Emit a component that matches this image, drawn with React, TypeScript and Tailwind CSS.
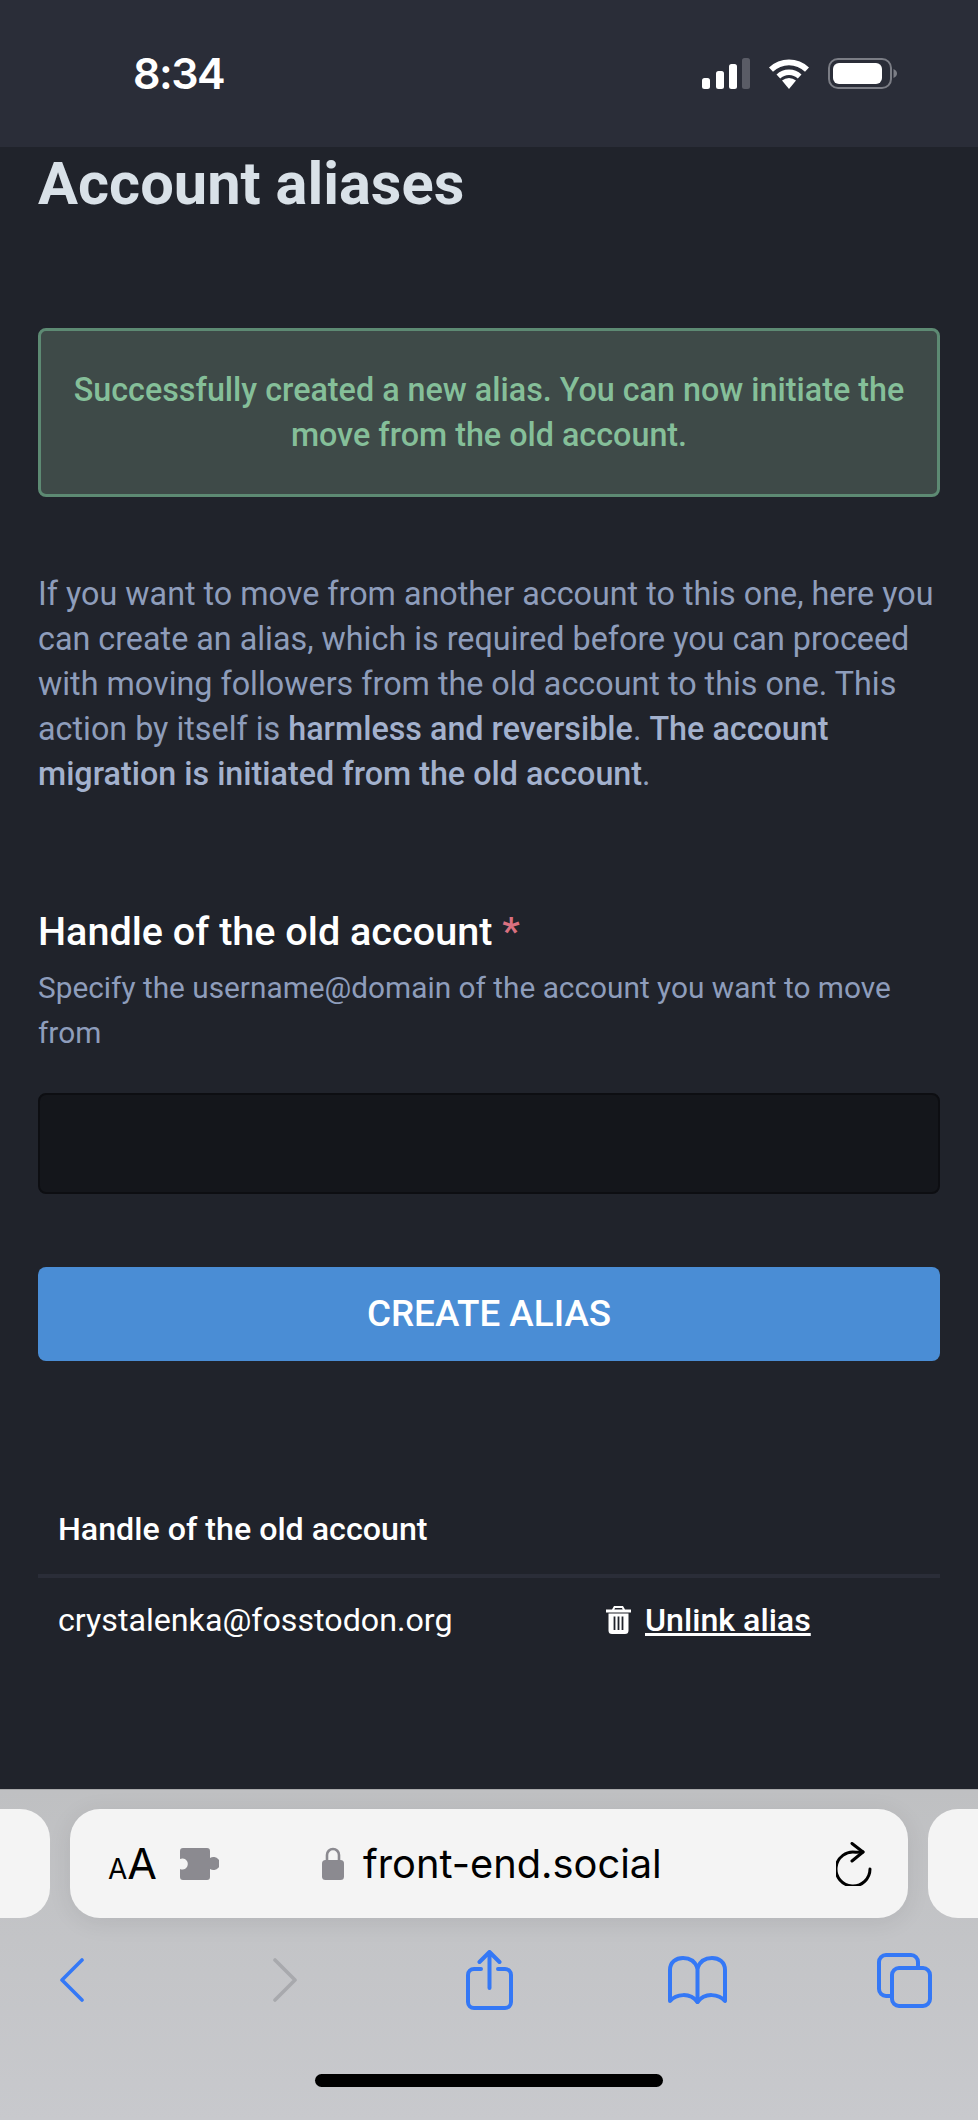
function StatusIcons() {
  return (
    <div className="flex items-center">
      {/* signal */}
      <svg width="48" height="31" viewBox="0 0 48 31">
        <rect x="0" y="20" width="8" height="11" rx="2.5" fill="#fff" />
        <rect x="14" y="13" width="8" height="18" rx="2.5" fill="#fff" />
        <rect x="27" y="6" width="8" height="25" rx="2.5" fill="#fff" />
        <rect x="40" y="0" width="8" height="31" rx="2.5" fill="#5a5c66" />
      </svg>
      {/* wifi */}
      <svg className="ml-[18px]" width="42" height="31" viewBox="0 0 42 31">
        <path d="M21 31 L14 22.5 A11 11 0 0 1 28 22.5 Z" fill="#fff" />
        <path d="M8.5 16.5 A18 18 0 0 1 33.5 16.5 L29.8 20.6 A12.5 12.5 0 0 0 12.2 20.6 Z" fill="#fff" />
        <path d="M1 9.5 A29 29 0 0 1 41 9.5 L37 13.8 A23 23 0 0 0 5 13.8 Z" fill="#fff" />
      </svg>
      {/* battery */}
      <svg className="ml-[18px]" width="69" height="31" viewBox="0 0 69 31">
        <rect x="1" y="1" width="62" height="29" rx="9" fill="none" stroke="#7b7d85" strokeWidth="2" />
        <rect x="5" y="5" width="49" height="21" rx="6" fill="#fff" />
        <path d="M65.5 11 C68 12 69 14 69 15.5 C69 17 68 19 65.5 20 Z" fill="#7b7d85" />
      </svg>
    </div>
  );
}

function TrashIcon() {
  return (
    <svg width="25" height="28" viewBox="0 0 25 28" fill="#fff">
      <path d="M8 0 H17 L19 3.5 H25 V6.5 H0 V3.5 H6 Z M9 2 L8.4 3.5 H16.6 L16 2 Z" fillRule="evenodd" />
      <path
        d="M2.5 7.5 H22.5 V24.5 A3.5 3.5 0 0 1 19 28 H6 A3.5 3.5 0 0 1 2.5 24.5 Z M7.6 10.5 V24 H9.4 V10.5 Z M11.6 10.5 V24 H13.4 V10.5 Z M15.6 10.5 V24 H17.4 V10.5 Z"
        fillRule="evenodd"
      />
    </svg>
  );
}

function PuzzleIcon() {
  return (
    <svg width="39" height="32" viewBox="0 0 39 32" fill="#8b8a90">
      <path d="M3 0 H27 A3 3 0 0 1 30 3 V10 A6.5 6.5 0 1 1 30 21 V29 A3 3 0 0 1 27 32 H3 A3 3 0 0 1 0 29 V21 A5.5 5.5 0 1 0 0 11 V3 A3 3 0 0 1 3 0 Z" />
    </svg>
  );
}

function LockIcon() {
  return (
    <svg width="22" height="33" viewBox="0 0 22 33" fill="none">
      <path d="M5 15 V8 A6 6 0 0 1 17 8 V15" stroke="#8b8a90" strokeWidth="2.6" />
      <rect x="0" y="13" width="22" height="20" rx="3.5" fill="#8b8a90" />
    </svg>
  );
}

function ReloadIcon() {
  return (
    <svg width="38" height="44" viewBox="0 0 38 44" fill="none" stroke="#000" strokeWidth="3" strokeLinecap="round" strokeLinejoin="round">
      <path d="M34 27 A17 17 0 1 1 20 10.3 L27 10" />
      <path d="M16 1.5 L27 10 L16 19" />
    </svg>
  );
}

function Toolbar() {
  const blue = "#3478f6";
  return (
    <div className="flex flex-col h-[331px] overflow-hidden bg-gradient-to-b from-[#bfc0c2] to-[#c8c9cd] border-t border-[#a8a9ab]">
      <div className="flex items-stretch gap-[20px] h-[109px] mt-[19px] font-['Inter',sans-serif]">
        <div className="w-[50px] shrink-0 bg-[#f4f4f4] rounded-r-[30px]" />
        <div className="w-[838px] shrink-0 flex items-center bg-[#f4f4f4] rounded-[30px] shadow-[0_4px_24px_rgba(0,0,0,0.08)]">
          <span className="ml-[38px] flex items-baseline font-['Inter',sans-serif] text-black leading-none">
            <span className="text-[28px]">A</span>
            <span className="text-[43px]">A</span>
          </span>
          <span className="ml-[23px]">
            <PuzzleIcon />
          </span>
          <span className="ml-[103px]">
            <LockIcon />
          </span>
          <span className="ml-[19px] text-[39.8px] leading-none text-black font-['Inter',sans-serif]">front-end.social</span>
          <span className="ml-auto mr-[34px]">
            <ReloadIcon />
          </span>
        </div>
        <div className="flex-1 bg-[#f4f4f4] rounded-l-[30px] -mr-[40px]" />
      </div>
      <div className="flex items-center mt-[31px] h-[62px]">
        <svg className="ml-[60px]" width="24" height="44" viewBox="0 0 24 44" fill="none" stroke={blue} strokeWidth="3.6" strokeLinecap="round" strokeLinejoin="round">
          <path d="M22 2 L2 22 L22 42" />
        </svg>
        <svg className="ml-[188px]" width="25" height="44" viewBox="0 0 25 44" fill="none" stroke="#a8a9ad" strokeWidth="3.6" strokeLinecap="round" strokeLinejoin="round">
          <path d="M3 2 L23 22 L3 42" />
        </svg>
        <svg className="ml-[169px]" width="47" height="60" viewBox="0 0 47 60" fill="none" stroke={blue} strokeWidth="4" strokeLinecap="round" strokeLinejoin="round">
          <path d="M15 19 H8 A6 6 0 0 0 2 25 V52 A6 6 0 0 0 8 58 H39 A6 6 0 0 0 45 52 V25 A6 6 0 0 0 39 19 H32" />
          <path d="M23.5 38 V2 M13.5 12 L23.5 2 L33.5 12" />
        </svg>
        <svg className="ml-[155px]" width="59" height="48" viewBox="0 0 59 48" fill="none" stroke={blue} strokeWidth="4" strokeLinecap="round" strokeLinejoin="round">
          <path d="M29.5 12 C27 5 21 2 15 2 C8 2 2 6 2 14 V45 C8 38 22 36 29.5 46 C37 36 51 38 57 45 V14 C57 6 51 2 44 2 C38 2 32 5 29.5 12 Z" />
          <path d="M29.5 12 V46" />
        </svg>
        <svg className="ml-[150px]" width="55" height="55" viewBox="0 0 55 55" fill="none" stroke={blue} strokeWidth="4" strokeLinejoin="round">
          <rect x="15" y="15" width="38" height="38" rx="7" />
          <path d="M15 43 H9 A7 7 0 0 1 2 36 V9 A7 7 0 0 1 9 2 H34 A7 7 0 0 1 41 9 V15" />
        </svg>
      </div>
      <div className="flex justify-center mt-[63px]">
        <div className="w-[348px] h-[13px] rounded-full bg-black" />
      </div>
    </div>
  );
}

export default function App() {
  return (
    <div className="w-[978px] h-[2120px] flex flex-col bg-[#20232b] font-['Roboto',sans-serif] overflow-hidden">
      <div className="h-[147px] shrink-0 flex items-center justify-between bg-[#2a2d38] pl-[133px] pr-[81px]">
        <span className="text-[43px] font-semibold tracking-[-0.035em] text-white leading-none font-['Inter',sans-serif] pb-[1px]">8:34</span>
        <StatusIcons />
      </div>

      <div className="flex-1 px-[38px]">
        <h2 className="mt-[7px] text-[59.6px] leading-[60px] font-bold text-[#d9e1e8]">Account aliases</h2>

        <div className="mt-[114px] h-[169px] flex items-center justify-center rounded-[8px] border-[3px] border-[#5d8a73] bg-[#3e4a48] px-[30px] text-center text-[32.3px] leading-[45px] font-medium text-[#85bf99]">
          Successfully created a new alias. You can now initiate the move from the old account.
        </div>

        <p className="mt-[75px] text-[32.3px] leading-[45px] text-[#8e9dbb]">
          If you want to move from another account to this one, here you can create an alias, which is required before you can proceed with moving followers from the old account to this one. This action by itself is{" "}
          <strong className="font-medium text-[#a3b1cd]">harmless and reversible</strong>.{" "}
          <strong className="font-medium text-[#a3b1cd]">The account migration is initiated from the old account</strong>.
        </p>

        <div className="mt-[110px] text-[39.6px] leading-[50px] font-medium text-white">
          Handle of the old account <span className="text-[#d9707f]">*</span>
        </div>
        <p className="mt-[8px] text-[29.8px] leading-[45px] text-[#8e9dbb]">
          Specify the username@domain of the account you want to move from
        </p>

        <div className="mt-[38px] h-[101px] rounded-[8px] border-2 border-[#0d0e12] bg-[#14161b]" />

        <button className="mt-[73px] block w-full h-[94px] rounded-[8px] bg-[#4a8dd5] text-[36.8px] font-medium text-white">
          CREATE ALIAS
        </button>

        <div className="mt-[150px] pl-[20px] text-[32.2px] leading-[36px] font-medium text-white">Handle of the old account</div>
        <div className="mt-[27px] h-[4px] bg-[#2a2d38]" />
        <div className="mt-[24px] flex items-center pl-[20px] text-[32.2px] leading-[36px] text-white">
          <span className="w-[548px]">crystalenka@fosstodon.org</span>
          <TrashIcon />
          <a className="ml-[14px] font-medium underline">Unlink alias</a>
        </div>
      </div>

      <Toolbar />
    </div>
  );
}
